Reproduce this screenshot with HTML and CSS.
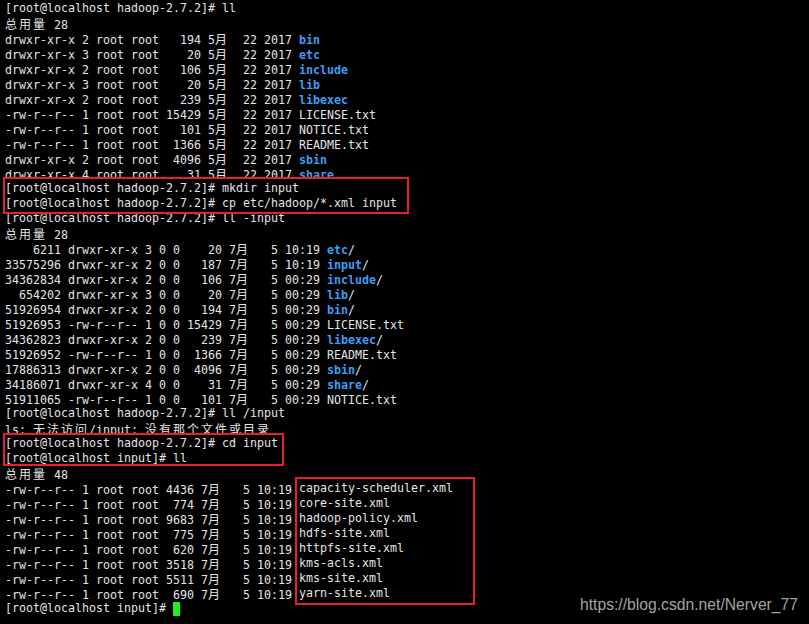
FILE: index.html
```html
<!DOCTYPE html>
<html lang="zh-CN">
<head>
<meta charset="utf-8">
<title>hadoop terminal</title>
<link rel="stylesheet" href="styles.css">
</head>
<body>
<main class="term">
<div class="ln">[root@localhost hadoop-2.7.2]# ll</div>
<div class="ln"><span class="c">总用量</span> 28</div>
<div class="ln">drwxr-xr-x 2 root root   194 5<span class="c">月</span>  22 2017 <b class="d">bin</b></div>
<div class="ln">drwxr-xr-x 3 root root    20 5<span class="c">月</span>  22 2017 <b class="d">etc</b></div>
<div class="ln">drwxr-xr-x 2 root root   106 5<span class="c">月</span>  22 2017 <b class="d">include</b></div>
<div class="ln">drwxr-xr-x 3 root root    20 5<span class="c">月</span>  22 2017 <b class="d">lib</b></div>
<div class="ln">drwxr-xr-x 2 root root   239 5<span class="c">月</span>  22 2017 <b class="d">libexec</b></div>
<div class="ln">-rw-r--r-- 1 root root 15429 5<span class="c">月</span>  22 2017 LICENSE.txt</div>
<div class="ln">-rw-r--r-- 1 root root   101 5<span class="c">月</span>  22 2017 NOTICE.txt</div>
<div class="ln">-rw-r--r-- 1 root root  1366 5<span class="c">月</span>  22 2017 README.txt</div>
<div class="ln">drwxr-xr-x 2 root root  4096 5<span class="c">月</span>  22 2017 <b class="d">sbin</b></div>
<div class="ln">drwxr-xr-x 4 root root    31 5<span class="c">月</span>  22 2017 <b class="d">share</b></div>
<div class="box b1">
<div class="ln">[root@localhost hadoop-2.7.2]# mkdir input</div>
<div class="ln">[root@localhost hadoop-2.7.2]# cp etc/hadoop/*.xml input</div>
</div>
<div class="ln">[root@localhost hadoop-2.7.2]# ll -input</div>
<div class="ln"><span class="c">总用量</span> 28</div>
<div class="ln">    6211 drwxr-xr-x 3 0 0    20 7<span class="c">月</span>   5 10:19 <b class="d">etc</b>/</div>
<div class="ln">33575296 drwxr-xr-x 2 0 0   187 7<span class="c">月</span>   5 10:19 <b class="d">input</b>/</div>
<div class="ln">34362834 drwxr-xr-x 2 0 0   106 7<span class="c">月</span>   5 00:29 <b class="d">include</b>/</div>
<div class="ln">  654202 drwxr-xr-x 3 0 0    20 7<span class="c">月</span>   5 00:29 <b class="d">lib</b>/</div>
<div class="ln">51926954 drwxr-xr-x 2 0 0   194 7<span class="c">月</span>   5 00:29 <b class="d">bin</b>/</div>
<div class="ln">51926953 -rw-r--r-- 1 0 0 15429 7<span class="c">月</span>   5 00:29 LICENSE.txt</div>
<div class="ln">34362823 drwxr-xr-x 2 0 0   239 7<span class="c">月</span>   5 00:29 <b class="d">libexec</b>/</div>
<div class="ln">51926952 -rw-r--r-- 1 0 0  1366 7<span class="c">月</span>   5 00:29 README.txt</div>
<div class="ln">17886313 drwxr-xr-x 2 0 0  4096 7<span class="c">月</span>   5 00:29 <b class="d">sbin</b>/</div>
<div class="ln">34186071 drwxr-xr-x 4 0 0    31 7<span class="c">月</span>   5 00:29 <b class="d">share</b>/</div>
<div class="ln">51911065 -rw-r--r-- 1 0 0   101 7<span class="c">月</span>   5 00:29 NOTICE.txt</div>
<div class="ln">[root@localhost hadoop-2.7.2]# ll /input</div>
<div class="ln">ls: <span class="c">无法访问</span>/input: <span class="c">没有那个文件或目录</span></div>
<div class="box b2">
<div class="ln">[root@localhost hadoop-2.7.2]# cd input</div>
<div class="ln">[root@localhost input]# ll</div>
</div>
<div class="ln"><span class="c">总用量</span> 48</div>
<div class="listing">
<div class="meta">
<div class="ln">-rw-r--r-- 1 root root 4436 7<span class="c">月</span>   5 10:19</div>
<div class="ln">-rw-r--r-- 1 root root  774 7<span class="c">月</span>   5 10:19</div>
<div class="ln">-rw-r--r-- 1 root root 9683 7<span class="c">月</span>   5 10:19</div>
<div class="ln">-rw-r--r-- 1 root root  775 7<span class="c">月</span>   5 10:19</div>
<div class="ln">-rw-r--r-- 1 root root  620 7<span class="c">月</span>   5 10:19</div>
<div class="ln">-rw-r--r-- 1 root root 3518 7<span class="c">月</span>   5 10:19</div>
<div class="ln">-rw-r--r-- 1 root root 5511 7<span class="c">月</span>   5 10:19</div>
<div class="ln">-rw-r--r-- 1 root root  690 7<span class="c">月</span>   5 10:19</div>
</div>
<div class="box b3">
<div class="ln">capacity-scheduler.xml</div>
<div class="ln">core-site.xml</div>
<div class="ln">hadoop-policy.xml</div>
<div class="ln">hdfs-site.xml</div>
<div class="ln">httpfs-site.xml</div>
<div class="ln">kms-acls.xml</div>
<div class="ln">kms-site.xml</div>
<div class="ln">yarn-site.xml</div>
</div>
</div>
<div class="ln">[root@localhost input]# <span class="cursor"></span></div>
</main>
<div class="watermark">https://blog.csdn.net/Nerver_77</div>
</body>
</html>
```
FILE: styles.css
```css
html, body {
  margin: 0;
  padding: 0;
  background: #000;
}
body {
  width: 809px;
  height: 624px;
  overflow: hidden;
  position: relative;
}
.term {
  padding: 1px 0 0 5px;
  color: #e4e4e4;
  font-family: "DejaVu Sans Mono", "Noto Sans CJK SC", monospace;
  font-size: 11.63px;
  line-height: 15px;
}
.ln {
  height: 15px;
  white-space: pre;
}
.c {
  font-family: "Noto Sans CJK SC", sans-serif;
  font-size: 12px;
  letter-spacing: 2px;
}
.d {
  color: #3d9df2;
  font-weight: bold;
}
.box {
  position: relative;
  z-index: 1;
  background: #000;
  outline: 2px solid #e5222b;
  box-sizing: border-box;
}
.b1 {
  width: 402px;
  margin: -2px 0 -1px;
  padding: 2px 0 1px;
}
.b2 {
  width: 277px;
  height: 29px;
  margin: -1px 0 2px;
  padding-top: 1px;
}
.listing {
  display: flex;
}
.meta {
  width: 294px;
  flex: none;
}
.b3 {
  width: 176px;
  margin: -2px 0 -2px -2px;
  padding: 2px 0 2px 2px;
}
.cursor {
  display: inline-block;
  width: 7px;
  height: 14px;
  background: #19f51c;
  vertical-align: -4px;
}
.watermark {
  position: absolute;
  left: 580px;
  top: 596px;
  font-family: "Liberation Sans", Arial, sans-serif;
  font-size: 15.7px;
  line-height: 18px;
  color: #a3a3a3;
  white-space: nowrap;
}
```
